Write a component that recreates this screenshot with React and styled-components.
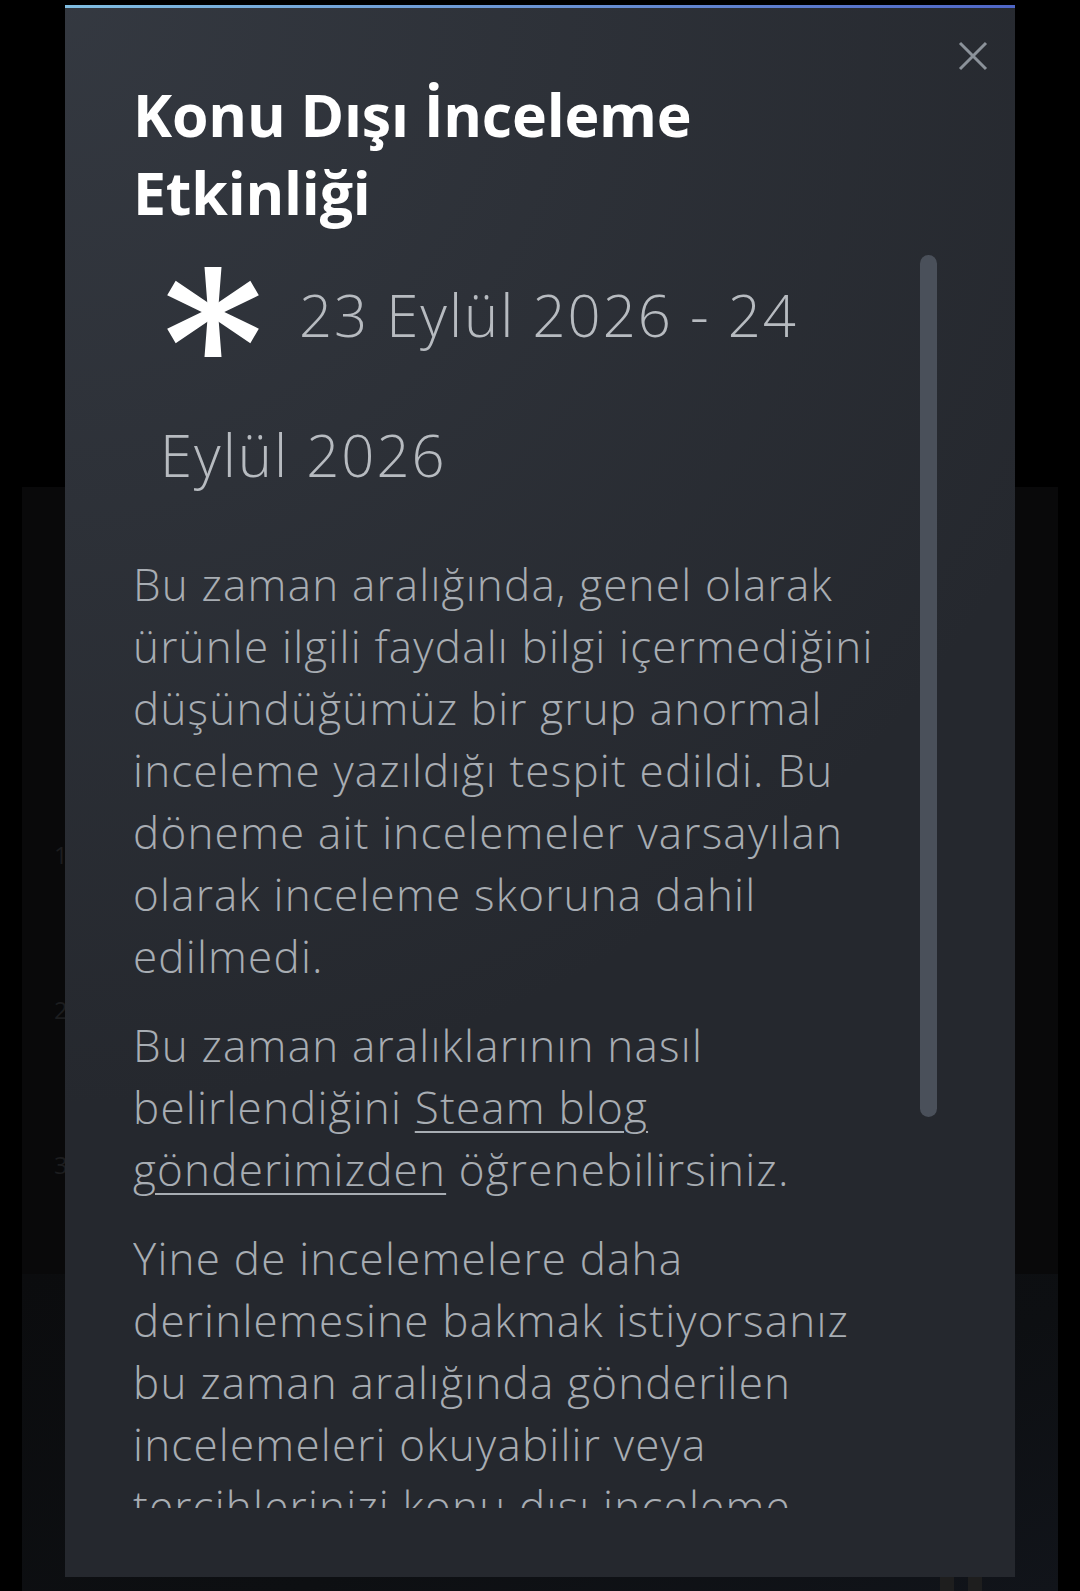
import React from 'react';
import styled, { createGlobalStyle } from 'styled-components';

const GlobalStyle = createGlobalStyle`
    html, body {
        margin: 0;
        padding: 0;
        background: #000;
        height: 1591px;
        overflow: hidden;
    }
    body {
        font-family: "Open Sans", "Noto Sans", "Liberation Sans", sans-serif;
    }
`;

const Page = styled.div`
    height: 1591px;
    padding: 487px 22px 0;
    box-sizing: border-box;
    display: flex;
    flex-direction: column;
`;

const Histogram = styled.div`
    height: 787px;
    background: #09090a;
    display: flex;
    flex-direction: column;
    gap: 131px;
    padding: 356px 0 0 32px;
    box-sizing: border-box;
`;

const Tick = styled.span`
    color: #1c1d1f;
    font-size: 24px;
    line-height: 24px;
`;

const Footer = styled.div`
    flex: 1;
    background: linear-gradient(160deg, #0b0c0e 0%, #0d0f12 60%, #11141a 100%);
    display: flex;
    justify-content: flex-end;
    align-items: flex-end;
    gap: 14px;
    padding-right: 76px;
`;

const FooterMark = styled.span`
    width: 14px;
    height: 14px;
    background: #1e1e1e;
`;

const Overlay = styled.div`
    position: fixed;
    inset: 0;
    display: flex;
    justify-content: center;
    align-items: flex-start;
    padding-top: 5px;
`;

const Dialog = styled.div`
    position: relative;
    width: 950px;
    height: 1572px;
    background: radial-gradient(circle at top left, rgba(74, 81, 92, 0.4) 0%, rgba(75, 81, 92, 0) 60%), #25282e;
    display: flex;
    flex-direction: column;
    box-sizing: border-box;
    padding: 0 78px 69px 68px;
    &::before {
        content: '';
        position: absolute;
        left: 0;
        right: 0;
        top: 0;
        height: 3px;
        background: linear-gradient(90deg, #80bde1 0%, #6a93d3 50%, #4f66c6 100%);
    }
`;

const CloseButton = styled.button`
    position: absolute;
    top: 34px;
    right: 25px;
    width: 34px;
    height: 34px;
    padding: 0;
    border: none;
    background: none;
    display: flex;
    align-items: center;
    justify-content: center;
    cursor: pointer;
`;

const Title = styled.h1`
    margin: 70px 0 0;
    max-width: 640px;
    color: #fff;
    font-size: 59px;
    line-height: 78px;
    font-weight: 700;
    letter-spacing: -0.2px;
`;

const Scroller = styled.div`
    flex: 1;
    min-height: 0;
    margin-top: 14px;
    display: flex;
`;

const Content = styled.div`
    flex: 1;
    overflow: hidden;
    padding-right: 37px;
`;

const ScrollTrack = styled.div`
    width: 17px;
    padding-top: 10px;
`;

const ScrollThumb = styled.div`
    height: 862px;
    border-radius: 9px;
    background: #4a505a;
`;

const DateRange = styled.div`
    padding-left: 27px;
    color: #b7bbc0;
    font-size: 58px;
    font-weight: 300;
    line-height: 140px;
    letter-spacing: 2px;
`;

const StarIcon = styled.svg`
    width: 96px;
    height: 92px;
    margin: 0 38px 0 5px;
    vertical-align: -21px;
`;

const Paragraph = styled.p`
    margin: 28px 0 0;
    color: #a8adb3;
    font-size: 44px;
    line-height: 62px;
    font-weight: 300;
    letter-spacing: 1.2px;
    & + & {
        margin-top: 27px;
    }
`;

const BlogLink = styled.a`
    color: inherit;
    text-decoration: underline;
    text-underline-offset: 7px;
    text-decoration-thickness: 2px;
`;

const Asterisk = () => (
    <StarIcon viewBox="-48 -46 96 92">
        <polygon points="-8.5,-45 8.5,-45 5,0 8.5,45 -8.5,45 -5,0" fill="#fff" />
        {[60, 120].map((deg) => (
            <polygon
                key={deg}
                points="-8.5,-48 8.5,-48 5,0 8.5,48 -8.5,48 -5,0"
                fill="#fff"
                transform={`rotate(${deg})`}
            />
        ))}
    </StarIcon>
);

const App = () => {
    return <React.Fragment>
        <GlobalStyle />
        <Page>
            <Histogram>
                <Tick>1</Tick>
                <Tick>2</Tick>
                <Tick>3</Tick>
            </Histogram>
            <Footer>
                <FooterMark />
                <FooterMark />
            </Footer>
        </Page>
        <Overlay>
            <Dialog>
                <CloseButton aria-label="Kapat">
                    <svg width="30" height="30" viewBox="0 0 30 30">
                        <path d="M2 2 L28 28 M28 2 L2 28" stroke="#8b929a" strokeWidth="3" />
                    </svg>
                </CloseButton>
                <Title>Konu Dışı İnceleme Etkinliği</Title>
                <Scroller>
                    <Content>
                        <DateRange>
                            <Asterisk />23 Eylül 2026 - 24 Eylül 2026
                        </DateRange>
                        <Paragraph>
                            Bu zaman aralığında, genel olarak ürünle ilgili faydalı bilgi içermediğini düşündüğümüz bir grup anormal inceleme yazıldığı tespit edildi. Bu döneme ait incelemeler varsayılan olarak inceleme skoruna dahil edilmedi.
                        </Paragraph>
                        <Paragraph>
                            Bu zaman aralıklarının nasıl belirlendiğini <BlogLink href="#">Steam blog gönderimizden</BlogLink> öğrenebilirsiniz.
                        </Paragraph>
                        <Paragraph>
                            Yine de incelemelere daha derinlemesine bakmak istiyorsanız bu zaman aralığında gönderilen incelemeleri okuyabilir veya tercihlerinizi konu dışı inceleme etkinliği ayarlarından değiştirebilirsiniz.
                        </Paragraph>
                    </Content>
                    <ScrollTrack>
                        <ScrollThumb />
                    </ScrollTrack>
                </Scroller>
            </Dialog>
        </Overlay>
    </React.Fragment>
}

export default App;
